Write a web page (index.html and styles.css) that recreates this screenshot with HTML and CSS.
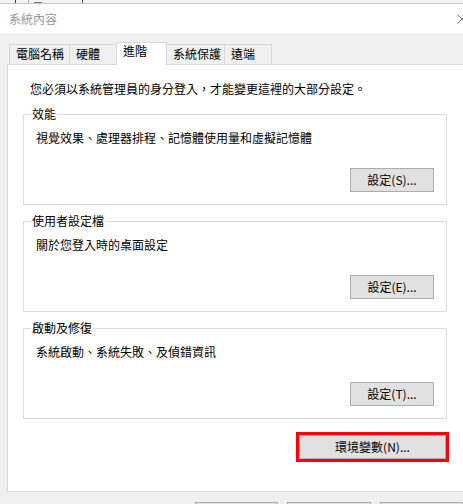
FILE: index.html
```html
<!DOCTYPE html>
<html lang="zh-Hant">
<head>
<meta charset="utf-8">
<title>系統內容</title>
<link rel="stylesheet" href="styles.css">
</head>
<body>
<div class="window">
  <div class="strip"><span class="mark mark-a"></span><span class="mark mark-b"></span><span class="mark mark-c"></span><span class="mark mark-d"></span></div>
  <div class="titlebar">
    <span class="title">系統內容</span>
    <svg class="close" width="10" height="10" viewBox="0 0 10 10"><path d="M0.5 0.5L9.5 9.5M9.5 0.5L0.5 9.5" stroke="#777" stroke-width="1" fill="none"/></svg>
  </div>
  <div class="client">
    <div class="tabs">
      <div class="tab tab-1">電腦名稱</div>
      <div class="tab tab-2">硬體</div>
      <div class="tab tab-3 active">進階</div>
      <div class="tab tab-4">系統保護</div>
      <div class="tab tab-5">遠端</div>
    </div>
    <div class="panel">
      <p class="intro">您必須以系統管理員的身分登入，才能變更這裡的大部分設定。</p>
      <fieldset class="group">
        <legend>效能</legend>
        <p class="desc">視覺效果、處理器排程、記憶體使用量和虛擬記憶體</p>
        <div class="actions"><button class="btn">設定(S)...</button></div>
      </fieldset>
      <fieldset class="group">
        <legend>使用者設定檔</legend>
        <p class="desc">關於您登入時的桌面設定</p>
        <div class="actions"><button class="btn">設定(E)...</button></div>
      </fieldset>
      <fieldset class="group">
        <legend>啟動及修復</legend>
        <p class="desc">系統啟動、系統失敗、及偵錯資訊</p>
        <div class="actions"><button class="btn">設定(T)...</button></div>
      </fieldset>
      <div class="env-row"><button class="btn btn-env">環境變數(N)...</button></div>
    </div>
    <div class="dialog-buttons">
      <button class="btn btn-dialog" aria-label="確定"></button>
      <button class="btn btn-dialog" aria-label="取消"></button>
      <button class="btn btn-dialog" aria-label="套用"></button>
    </div>
  </div>
</div>
</body>
</html>
```
FILE: styles.css
```css
html, body {
  margin: 0;
  padding: 0;
}
body {
  width: 463px;
  height: 504px;
  overflow: hidden;
  background: #f0f0f0;
  color: #000;
  font: 12px/16px "Noto Sans CJK TC", "Noto Sans", sans-serif;
}
.window {
  width: 463px;
  height: 504px;
  overflow: hidden;
}
.strip {
  height: 3px;
  background: #f4f4f4;
  border-bottom: 1px solid #c6c6c6;
  display: flex;
}
.mark {
  width: 1px;
  height: 3px;
  background: #3a3a3a;
}
.mark-a { margin-left: 15px; }
.mark-b { margin-left: 12px; background: #b5b5b5; }
.mark-c { margin-left: 5px; width: 8px; height: 1px; margin-top: 2px; background: #777; }
.mark-d { margin-left: 40px; background: #555; }

.titlebar {
  height: 29px;
  background: #fff;
  display: flex;
  align-items: center;
  padding-left: 9px;
  overflow: hidden;
}
.title {
  color: #9a9a9a;
}
.close {
  flex: none;
  margin-left: auto;
  margin-right: -4px;
}

.client {
  background: #f0f0f0;
  padding: 9px 0 0 7px;
  height: 471px;
  box-sizing: border-box;
  overflow: hidden;
}
.tabs {
  position: relative;
  display: flex;
  align-items: flex-end;
  height: 23px;
  padding-left: 2px;
  margin-bottom: -1px;
}
.tab {
  box-sizing: border-box;
  height: 20px;
  margin-bottom: 1px;
  margin-left: -1px;
  padding: 1px 0 0 6px;
  border: 1px solid #d9d9d9;
  border-bottom: none;
  background: #f0f0f0;
  white-space: nowrap;
}
.tab:first-child { margin-left: 0; }
.tab-1 { width: 61px; }
.tab-2 { width: 48px; }
.tab-3 { width: 51px; }
.tab-4 { width: 59px; }
.tab-5 { width: 48px; }
.tab.active {
  height: 23px;
  margin-bottom: 0;
  padding-top: 0;
  background: #fff;
}

.panel {
  box-sizing: border-box;
  width: 470px;
  height: 428px;
  background: #fff;
  border: 1px solid #d9d9d9;
  padding: 16px 0 0 15px;
}
.intro {
  margin: 0 0 9px 7px;
}
.group {
  box-sizing: border-box;
  width: 424px;
  min-width: 0;
  margin: 0;
  padding: 8px 12px 12px;
  border: 1px solid #dcdcdc;
}
.group + .group {
  margin-top: 8px;
}
.group legend {
  padding: 0 1px;
  margin-left: -5px;
  line-height: 16px;
}
.desc {
  margin: 0;
}
.actions {
  display: flex;
  justify-content: flex-end;
  margin-top: 22px;
}
.btn {
  box-sizing: border-box;
  width: 84px;
  height: 24px;
  padding: 0;
  border: 1px solid #adadad;
  border-radius: 0;
  background: #e1e1e1;
  color: #000;
  font: inherit;
  line-height: 16px;
}
.env-row {
  box-sizing: border-box;
  width: 424px;
  display: flex;
  justify-content: flex-end;
  padding-right: 1px;
  margin-top: 16px;
}
.btn-env {
  width: 147px;
  outline: 3px solid #f00;
  outline-offset: 0;
}
.dialog-buttons {
  display: flex;
  gap: 9px;
  padding-left: 188px;
  margin-top: 10px;
}
.btn-dialog {
  width: 86px;
  height: 23px;
}
```
